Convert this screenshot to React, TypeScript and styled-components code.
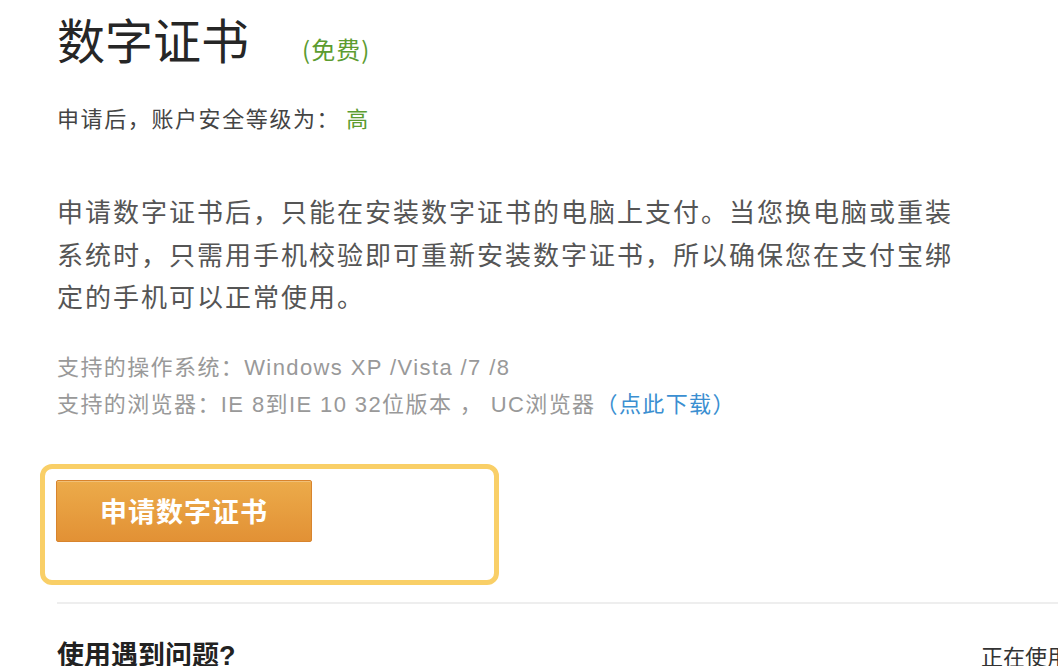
import React from "react";
import styled, { createGlobalStyle } from "styled-components";

const GlobalStyle = createGlobalStyle`
  html, body {
    margin: 0;
    padding: 0;
    background: #fff;
    overflow: hidden;
  }
  body {
    font-family: "Liberation Sans", "Noto Sans CJK SC", sans-serif;
  }
`;

const Page = styled.div`
  width: 1058px;
  height: 666px;
  padding: 19px 0 0 57px;
  box-sizing: border-box;
  overflow: hidden;
`;

const TitleRow = styled.div`
  display: flex;
  align-items: baseline;
`;

const Title = styled.h1`
  margin: 0;
  font-size: 48px;
  line-height: 48px;
  font-weight: normal;
  color: #262626;
`;

const Free = styled.span`
  margin-left: 53px;
  font-family: "Noto Sans CJK SC", sans-serif;
  font-size: 24px;
  letter-spacing: 1px;
  color: #5c9c30;
`;

const Level = styled.p`
  margin: 42px 0 0;
  font-size: 22px;
  line-height: 22px;
  letter-spacing: 1.6px;
  color: #444;
`;

const High = styled.span`
  margin-left: 6px;
  color: #5c9c30;
`;

const Intro = styled.p`
  margin: 61px 0 0;
  width: 910px;
  font-size: 26px;
  line-height: 42.5px;
  letter-spacing: 2px;
  color: #555;
`;

const Support = styled.div`
  margin-top: 29px;
  font-size: 22px;
  line-height: 37px;
  letter-spacing: 1.4px;
  color: #999;
`;

const Link = styled.a`
  color: #3b8fd1;
  text-decoration: none;
`;

const ApplyBox = styled.div`
  margin: 41px 0 0 -17px;
  padding: 11px;
  width: 427px;
  height: 89px;
  border: 5px solid #f9cf67;
  border-radius: 12px;
`;

const ApplyButton = styled.button`
  display: flex;
  align-items: center;
  justify-content: center;
  width: 256px;
  height: 62px;
  padding: 0;
  border: 1px solid #d8842d;
  border-radius: 2px;
  background: linear-gradient(#ecab4a, #e29135);
  box-shadow: inset 0 1px 0 rgba(255, 255, 255, 0.25);
  color: #fff;
  font-family: "Noto Sans CJK SC", sans-serif;
  font-size: 27px;
  font-weight: bold;
  letter-spacing: 1px;
  cursor: pointer;
`;

const Divider = styled.hr`
  margin: 17px 0 0;
  border: 0;
  border-top: 2px solid #eeeeee;
`;

const HelpRow = styled.div`
  margin-top: 39px;
  display: flex;
  align-items: baseline;
  white-space: nowrap;
`;

const HelpTitle = styled.h2`
  margin: 0;
  width: 924px;
  flex-shrink: 0;
  font-size: 27px;
  line-height: 27px;
  font-weight: bold;
  color: #222;
`;

const SideTitle = styled.span`
  font-size: 22px;
  line-height: 22px;
  color: #333;
`;

export default function App() {
  return (
    <>
      <GlobalStyle />
      <Page>
        <TitleRow>
          <Title>数字证书</Title>
          <Free>(免费)</Free>
        </TitleRow>
        <Level>
          申请后，账户安全等级为：<High>高</High>
        </Level>
        <Intro>
          申请数字证书后，只能在安装数字证书的电脑上支付。当您换电脑或重装系统时，只需用手机校验即可重新安装数字证书，所以确保您在支付宝绑定的手机可以正常使用。
        </Intro>
        <Support>
          <div>支持的操作系统：Windows XP /Vista /7 /8</div>
          <div>
            支持的浏览器：IE 8到IE 10 32位版本 ， UC浏览器<Link href="#">（点此下载）</Link>
          </div>
        </Support>
        <ApplyBox>
          <ApplyButton>申请数字证书</ApplyButton>
        </ApplyBox>
        <Divider />
        <HelpRow>
          <HelpTitle>使用遇到问题?</HelpTitle>
          <SideTitle>正在使用</SideTitle>
        </HelpRow>
      </Page>
    </>
  );
}
